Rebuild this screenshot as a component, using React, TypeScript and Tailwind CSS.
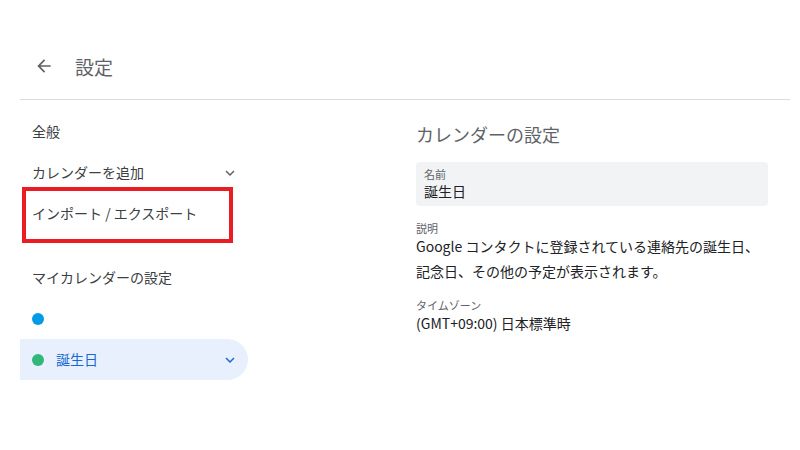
import React from "react";

const font = { fontFamily: '"Noto Sans CJK JP", Roboto, "Noto Sans", sans-serif' };

function Chevron({ className }: { className?: string }) {
  return (
    <svg viewBox="0 0 24 24" className={className} fill="currentColor">
      <path d="M7.41 8.59 12 13.17l4.59-4.58L18 10l-6 6-6-6z" />
    </svg>
  );
}

export default function App() {
  return (
    <div className="w-[800px] h-[450px] bg-white overflow-hidden" style={font}>
      <div className="flex items-center h-[30px] mt-[51px] pl-[34px]">
        <svg viewBox="0 0 24 24" className="w-[20px] h-[20px] text-[#5f6368]" fill="currentColor">
          <path d="M20 11H7.83l5.59-5.59L12 4l-8 8 8 8 1.41-1.41L7.83 13H20v-2z" />
        </svg>
        <span className="ml-[21px] text-[19px] text-[#5f6368] leading-none">設定</span>
      </div>
      <div className="ml-[20px] mr-[10px] mt-[18px] h-px bg-[#dadce0]" />
      <div className="flex">
        <div className="relative w-[228px] ml-[20px] mt-[11px] text-[14px] text-[#3c4043]">
          <div className="h-[41px] flex items-center pl-[12px]">全般</div>
          <div className="h-[41px] flex items-center pl-[12px] pr-[9px] justify-between">
            <span>カレンダーを追加</span>
            <Chevron className="w-[18px] h-[18px] text-[#5f6368]" />
          </div>
          <div className="h-[41px] flex items-center pl-[12px]">インポート / エクスポート</div>
          <div className="h-[41px] mt-[23px] flex items-center pl-[12px]">マイカレンダーの設定</div>
          <div className="h-[41px] flex items-center pl-[12px]">
            <span className="w-[12px] h-[12px] rounded-full bg-[#039be5]" />
          </div>
          <div className="h-[41px] flex items-center pl-[12px] pr-[9px] bg-[#e8f0fe] rounded-r-full text-[#1967d2]">
            <span className="w-[12px] h-[12px] rounded-full bg-[#33b679]" />
            <span className="ml-[12px] flex-1">誕生日</span>
            <Chevron className="w-[18px] h-[18px] text-[#1967d2]" />
          </div>
          <div className="absolute left-[2px] top-[76px] w-[211px] h-[56px] border-[4px] border-[#ec1c24]" />
        </div>
        <div className="ml-[168px] w-[352px] mt-[22px] text-[#3c4043]">
          <div className="text-[18px] text-[#5f6368] leading-[24px]">カレンダーの設定</div>
          <div className="mt-[16px] h-[44px] bg-[#f1f3f4] rounded-[4px] pl-[8px] pt-[5px]">
            <div className="text-[11px] leading-[14px] text-[#5f6368]">名前</div>
            <div className="text-[14px] leading-[20px] text-[#202124]">誕生日</div>
          </div>
          <div className="mt-[15px] text-[11px] leading-[14px] text-[#5f6368]">説明</div>
          <div className="text-[14px] leading-[25px] text-[#202124] -mt-[1px] whitespace-nowrap">
            Google コンタクトに登録されている連絡先の誕生日、
            <br />
            記念日、その他の予定が表示されます。
          </div>
          <div className="mt-[14px] text-[11px] leading-[14px] text-[#5f6368]">タイムゾーン</div>
          <div className="text-[14px] leading-[20px] text-[#202124] mt-[1px]">(GMT+09:00) 日本標準時</div>
        </div>
      </div>
    </div>
  );
}
